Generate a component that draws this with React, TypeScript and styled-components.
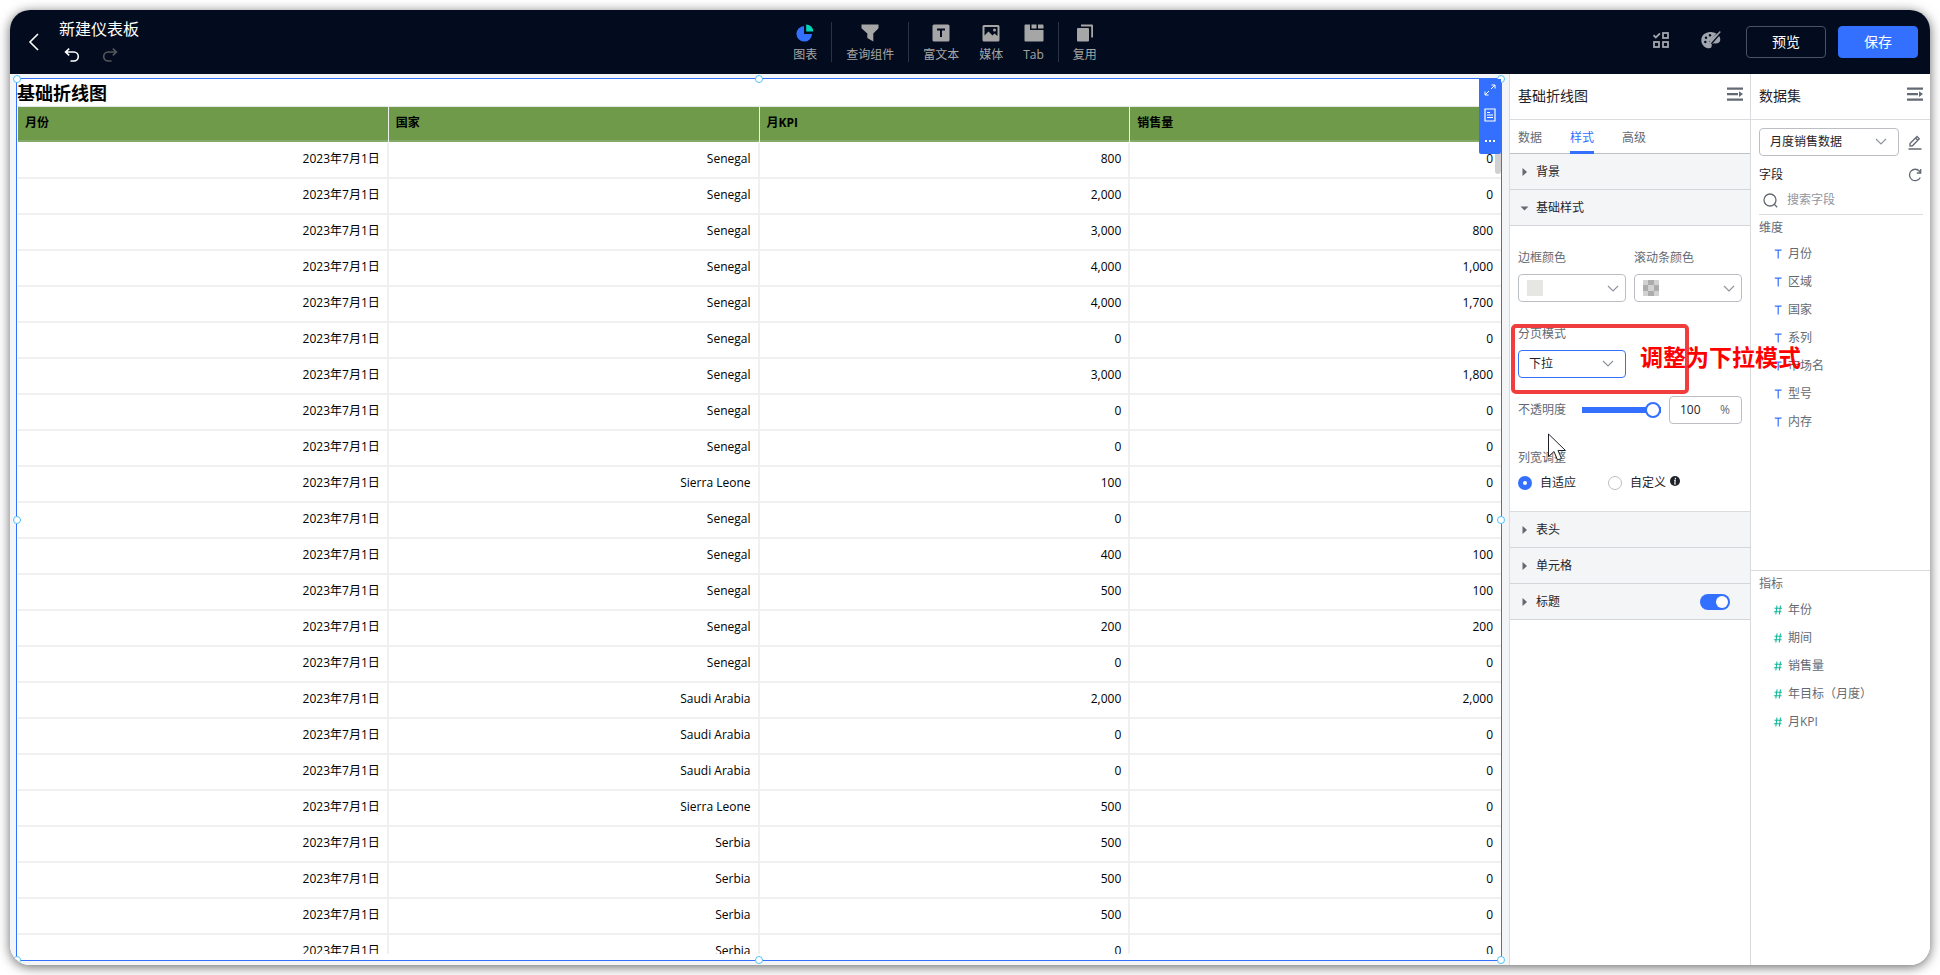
import React, { useState } from 'react';
import styled, { createGlobalStyle } from 'styled-components';

const BLUE = '#3370ff';
const INK = '#1f2329';
const GREY = '#646a73';
const LINE = '#d9dbde';

const GlobalStyle = createGlobalStyle`
  *, *::before, *::after { box-sizing: border-box; }
  html, body { margin: 0; background: #fff; }
  body {
    font-family: 'Open Sans', 'Noto Sans CJK SC', sans-serif;
    font-size: 12px;
    line-height: 18px;
    color: ${INK};
  }
  button, input, select { font: inherit; color: inherit; }
  h1, h2, p, ul { margin: 0; padding: 0; font-weight: normal; list-style: none; }
`;

const Page = styled.div`
  height: 100vh;
  min-height: 680px;
  padding: 10px;
`;

const Window = styled.div`
  height: 100%;
  display: flex;
  flex-direction: column;
  border-radius: 20px;
  overflow: hidden;
  background: #fff;
  box-shadow: 0 2px 12px rgba(0, 0, 0, 0.6);
`;

const IconButton = styled.button<{ $tone?: string }>`
  display: flex;
  padding: 0;
  border: 0;
  background: none;
  color: ${p => p.$tone ?? GREY};
  cursor: pointer;
`;

/* ---------- top bar ---------- */

const TopBar = styled.header`
  flex: none;
  height: 64px;
  padding: 0 12px 0 16px;
  display: flex;
  align-items: center;
  background: #030c1e;
  color: #fff;
`;

const TopSide = styled.div<{ $end?: boolean }>`
  flex: 1 1 0;
  display: flex;
  align-items: center;
  justify-content: ${p => (p.$end ? 'flex-end' : 'flex-start')};
`;

const TitleBlock = styled.div`
  margin: 0 0 4px 19px;
  display: flex;
  flex-direction: column;
  gap: 8px;
`;

const BoardTitle = styled.h1`
  font-size: 16px;
  line-height: 22px;
`;

const History = styled.div`
  display: flex;
  gap: 22px;
  padding-left: 5px;
`;

const Tools = styled.nav`
  display: flex;
  align-items: center;
  margin-right: 54px;
`;

const ToolGroup = styled.div`
  display: flex;
  gap: 20px;
  height: 40px;
  padding: 0 14px;
  & + & { border-left: 1px solid #2c3342; }
`;

const Tool = styled.button`
  display: flex;
  flex-direction: column;
  align-items: center;
  justify-content: flex-start;
  gap: 4px;
  height: 44px;
  padding: 2px 0 0;
  border: 0;
  background: none;
  color: #a6a6a6;
  cursor: pointer;
`;

const ActionIcons = styled.div`
  display: flex;
  align-items: center;
  gap: 32px;
  margin: 0 25px 4px 0;
`;

const Action = styled.button<{ $primary?: boolean }>`
  width: 80px;
  height: 32px;
  margin-left: ${p => (p.$primary ? '12px' : '0')};
  padding: 0;
  border: 1px solid ${p => (p.$primary ? BLUE : '#4b5160')};
  border-radius: 4px;
  background: ${p => (p.$primary ? BLUE : 'transparent')};
  color: #fff;
  font-size: 14px;
  line-height: 20px;
  cursor: pointer;
`;

/* ---------- canvas and table ---------- */

const Body = styled.div`
  flex: 1;
  min-height: 0;
  display: flex;
`;

const Canvas = styled.main`
  flex: 1;
  min-width: 0;
  padding: 4px 7px 4px 6px;
  background: #f4f5f7;
  display: flex;
`;

const Widget = styled.section`
  position: relative;
  flex: 1;
  min-width: 0;
  display: flex;
  flex-direction: column;
  padding-bottom: 6px;
  border: 1px solid ${BLUE};
  background: #fff;
`;

const WidgetTitle = styled.h2`
  height: 27px;
  font-size: 18px;
  line-height: 28px;
  font-weight: bold;
  color: #000;
`;

const TableArea = styled.div`
  position: relative;
  flex: 1;
  min-height: 0;
  overflow: hidden;
  padding-left: 1px;
  border-top: 1px solid #e6e6e6;
`;

const DataTable = styled.table`
  width: 100%;
  table-layout: fixed;
  border-collapse: separate;
  border-spacing: 0;
  color: #000;
`;

const HeadCell = styled.th`
  height: 36px;
  padding: 0 7px 4px;
  text-align: left;
  font-weight: bold;
  background: #6e9a4a;
  border-right: 1px solid #f0f0ee;
  border-bottom: 1px solid #fff;
  box-shadow: inset 0 -2px #85aa67;
  &:last-child { border-right: 0; }
`;

const Cell = styled.td`
  height: 36px;
  padding: 0 7px 2px;
  text-align: right;
  border-right: 2px solid #f0f0f0;
  border-bottom: 2px solid #f0f0f0;
  &:last-child { padding-right: 8px; border-right: 0; }
`;

const ScrollThumb = styled.span`
  position: absolute;
  right: 0;
  top: 38px;
  width: 6px;
  height: 29px;
  border-radius: 3px;
  background: #d0d0d0;
`;

const Handle = styled.span<{ $x: string; $y: string }>`
  position: absolute;
  left: ${p => p.$x};
  top: ${p => p.$y};
  width: 8px;
  height: 8px;
  margin: -4px;
  border: 1px solid #53c1f5;
  border-radius: 50%;
  background: #fff;
`;

const WidgetTools = styled.div`
  position: absolute;
  top: 0;
  right: 0;
  width: 22px;
  padding: 5px 0 6px;
  display: flex;
  flex-direction: column;
  align-items: center;
  gap: 12px;
  border-radius: 0 0 2px 2px;
  background: ${BLUE};
`;

/* ---------- side panels ---------- */

const Panel = styled.aside<{ $width: number }>`
  flex: none;
  width: ${p => p.$width}px;
  display: flex;
  flex-direction: column;
  border-left: 1px solid ${LINE};
  background: #fff;
`;

const PanelHead = styled.div`
  flex: none;
  height: 46px;
  padding: 12px 7px 0 8px;
  display: flex;
  align-items: flex-start;
  justify-content: space-between;
  border-bottom: 1px solid ${LINE};
`;

const PanelTitle = styled.h2`
  font-size: 14px;
  line-height: 20px;
`;

const Tabs = styled.div`
  display: flex;
  gap: 28px;
  height: 34px;
  padding: 0 8px;
  border-bottom: 1px solid #bfc1c5;
`;

const TabButton = styled.button<{ $active: boolean }>`
  height: 34px;
  padding: 2px 0 0;
  border: 0;
  border-top: 3px solid transparent;
  border-bottom: 3px solid ${p => (p.$active ? BLUE : 'transparent')};
  background: none;
  color: ${p => (p.$active ? BLUE : GREY)};
  cursor: pointer;
`;

const SectionHead = styled.div<{ $topLine?: boolean }>`
  display: flex;
  align-items: center;
  justify-content: space-between;
  height: ${p => (p.$topLine ? 37 : 36)}px;
  padding: 0 20px 0 12px;
  border-top: ${p => (p.$topLine ? `1px solid ${LINE}` : '0')};
  border-bottom: 1px solid #d3d5d8;
  background: #f4f5f7;
`;

const SectionToggle = styled.button`
  display: flex;
  align-items: center;
  gap: 8px;
  padding: 0;
  border: 0;
  background: none;
  cursor: pointer;
  svg { width: 6px; height: 8px; }
`;

const SectionBody = styled.div`
  padding: 23px 8px 19px;
  display: flex;
  flex-direction: column;
`;

const FieldRow = styled.div`
  display: flex;
  gap: 8px;
  margin-bottom: 23px;
`;

const Field = styled.div`
  position: relative;
  display: flex;
  flex-direction: column;
  gap: 7px;
`;

const FieldLabel = styled.label`
  color: ${GREY};
  white-space: nowrap;
`;

const ColorButton = styled.button`
  width: 108px;
  height: 28px;
  padding: 0 6px 0 8px;
  display: flex;
  align-items: center;
  justify-content: space-between;
  border: 1px solid #bbbfc4;
  border-radius: 4px;
  background: #fff;
  cursor: pointer;
`;

const Swatch = styled.span<{ $checker?: boolean }>`
  width: 16px;
  height: 16px;
  background: ${p =>
    p.$checker
      ? 'repeating-conic-gradient(from 90deg at 5px 5px, #d2d2d2 0 25%, #acacac 0 50%) 0 0 / 11px 11px'
      : '#e6e6e4'};
`;

const SelectBox = styled.div<{ $width: number }>`
  position: relative;
  width: ${p => p.$width}px;
  height: 28px;
  svg {
    position: absolute;
    right: 12px;
    top: 9px;
    pointer-events: none;
  }
`;

const Select = styled.select<{ $focused?: boolean }>`
  appearance: none;
  width: 100%;
  height: 100%;
  padding: 0 24px 0 10px;
  border: 1px solid ${p => (p.$focused ? BLUE : '#bbbfc4')};
  border-radius: 4px;
  background: #fff;
`;

const OpacityRow = styled.div`
  display: flex;
  align-items: center;
  gap: 8px;
  height: 28px;
  margin: 18px 0 25px;
`;

const Slider = styled.input`
  appearance: none;
  flex: 1;
  min-width: 0;
  height: 16px;
  margin: 0 0 0 8px;
  background: linear-gradient(${BLUE}, ${BLUE}) center / 100% 6px no-repeat;
  border-radius: 3px;
  &::-webkit-slider-thumb {
    appearance: none;
    width: 16px;
    height: 16px;
    border: 2px solid ${BLUE};
    border-radius: 50%;
    background: #fff;
  }
`;

const NumberBox = styled.label`
  width: 73px;
  height: 28px;
  padding: 0 11px 0 10px;
  display: flex;
  align-items: center;
  justify-content: space-between;
  border: 1px solid #bbbfc4;
  border-radius: 4px;
  color: ${GREY};
`;

const NumberInput = styled.input`
  width: 28px;
  padding: 0;
  border: 0;
  outline: 0;
  background: none;
  color: ${INK};
`;

const RadioRow = styled.div`
  display: flex;
  gap: 32px;
`;

const RadioLabel = styled.label`
  display: flex;
  align-items: center;
  gap: 8px;
  svg { margin: -4px 0 0 -4px; }
`;

const Radio = styled.input`
  appearance: none;
  width: 14px;
  height: 14px;
  margin: 0;
  border: 1px solid #bbbfc4;
  border-radius: 50%;
  background: #fff;
  &:checked { border: 5px solid ${BLUE}; }
`;

const Switch = styled.input`
  appearance: none;
  width: 30px;
  height: 16px;
  margin: 0;
  border-radius: 8px;
  background: #bbbfc4;
  &::before {
    content: '';
    display: block;
    width: 12px;
    height: 12px;
    margin: 2px;
    border-radius: 50%;
    background: #fff;
  }
  &:checked { background: ${BLUE}; }
  &:checked::before { margin-left: 16px; }
`;

const CalloutFrame = styled.span`
  position: absolute;
  z-index: 2;
  left: -7px;
  top: -1px;
  width: 178px;
  height: 70px;
  border: 4px solid #f03e3e;
  border-radius: 5px;
  pointer-events: none;
`;

const CalloutText = styled.span`
  position: absolute;
  z-index: 2;
  left: 122px;
  top: 19px;
  font-family: 'Liberation Serif', 'Noto Sans CJK SC', serif;
  font-size: 23px;
  line-height: 30px;
  font-weight: bold;
  color: #ff0000;
  white-space: nowrap;
  pointer-events: none;
`;

const Pointer = styled.svg`
  position: absolute;
  z-index: 3;
  left: 30px;
  top: -16px;
`;

/* ---------- dataset panel ---------- */

const DatasetTop = styled.div`
  padding: 8px 7px 0 8px;
`;

const Line = styled.div`
  display: flex;
  align-items: center;
  justify-content: space-between;
  padding-right: 1px;
`;

const FieldsLine = styled(Line)`
  height: 24px;
  margin-top: 6px;
  padding-top: 1px;
`;

const SearchLine = styled.label`
  display: flex;
  align-items: center;
  gap: 9px;
  height: 29px;
  padding-left: 4px;
  border-bottom: 1px solid ${LINE};
  color: ${GREY};
`;

const SearchInput = styled.input`
  flex: 1;
  min-width: 0;
  padding: 0;
  border: 0;
  outline: 0;
  background: none;
  &::placeholder { color: #8f959e; opacity: 1; }
`;

const FieldGroup = styled.section<{ $share: number; $line?: boolean }>`
  flex: ${p => p.$share} 1 0;
  min-height: 0;
  overflow: auto;
  border-bottom: ${p => (p.$line ? `1px solid ${LINE}` : '0')};
`;

const GroupName = styled.h2`
  padding: 4px 8px 3px;
  font-size: 12px;
  line-height: 18px;
  color: ${GREY};
`;

const FieldItem = styled.li`
  display: flex;
  align-items: center;
  gap: 6px;
  height: 28px;
  padding-left: 23px;
  color: ${GREY};
`;

/* ---------- icons ---------- */

const stroke = { fill: 'none', stroke: 'currentColor' } as const;

const Chevron = () => (
  <svg width="12" height="9" viewBox="0 0 12 9" {...stroke} color="#8f959e" strokeWidth="1.2">
    <path d="M1 2l5 5 5-5" />
  </svg>
);
const Caret = ({ open }: { open?: boolean }) => (
  <svg viewBox="0 0 6 8" overflow="visible" fill={GREY}>
    {open ? <path d="M-1.500 2.500h8L2.500 6.500z" /> : <path d="M0.500 0l4.500 4-4.500 4z" />}
  </svg>
);
const CollapseIcon = () => (
  <svg width="16" height="16" viewBox="0 0 16 16" fill={GREY}>
    <path d="M0 1.500h16v2.200H0zM0 7h11v2.200H0zM0 12.500h16v2.200H0zM12 5.200l4 2.900-4 2.900z" />
  </svg>
);
const UndoIcon = ({ flip }: { flip?: boolean }) => (
  <svg width="16" height="14" viewBox="0 0 16 14" {...stroke} strokeWidth="1.600">
    <g transform={flip ? 'translate(16 0) scale(-1 1)' : undefined}>
      <path d="M5.200 0.700L1.600 4l3.600 3.300M1.800 4h8a4.500 4.500 0 0 1 0 9H6.500" />
    </g>
  </svg>
);

const PieIcon = () => (
  <svg width="18" height="18" viewBox="0 0 18 18">
    <path fill={BLUE} d="M8 2v8h8a7.800 7.800 0 1 1-8-8z" />
    <path fill="#00d6b9" d="M10.200 0.500a7 7 0 0 1 7 7h-7z" />
  </svg>
);
const FunnelIcon = () => (
  <svg width="18" height="18" viewBox="0 0 18 18" fill="currentColor">
    <path d="M0.500 0.500h17v3.800L12.300 9.500V17.500L6.300 14V9.500L0.500 4.300z" />
  </svg>
);
const TextIcon = () => (
  <svg width="18" height="18" viewBox="0 0 18 18">
    <rect x="0.500" y="0.500" width="17" height="17" rx="1.500" fill="currentColor" />
    <path d="M5 5.500h8M9 5.500v7.500" stroke="#030c1e" strokeWidth="2" fill="none" />
  </svg>
);
const ImageIcon = () => (
  <svg width="18" height="18" viewBox="0 0 18 18">
    <rect x="0.500" y="1" width="17" height="16.500" rx="1.500" fill="currentColor" />
    <path d="M2.500 3h13v9l-3-2.500-2 2-4-4-4 4z" fill="#030c1e" />
    <circle cx="12.500" cy="6" r="1.500" fill="currentColor" />
  </svg>
);
const TabIcon = () => (
  <svg width="20" height="18" viewBox="0 0 20 18" fill="currentColor">
    <path d="M0.500 1.500Q0.500 0.500 1.500 0.500H6V6H19.500V16.500Q19.500 17.500 18.500 17.500H1.500Q0.500 17.500 0.500 16.500zM7.500 0.500h5v4h-5zM14 0.500h4.500q1 0 1 1v3H14z" />
  </svg>
);
const CopyIcon = () => (
  <svg width="18" height="18" viewBox="0 0 18 18" fill="currentColor">
    <rect x="1" y="4" width="12" height="13.500" rx="1" />
    <path d="M5 0.500h11q1 0 1 1V13.500h-1.800V2.500H5z" />
  </svg>
);
const ChecksIcon = () => (
  <svg width="16" height="16" viewBox="0 0 16 16" {...stroke} strokeWidth="1.800">
    <rect x="10" y="1" width="5" height="5" />
    <rect x="1" y="10" width="5" height="5" />
    <rect x="10" y="10" width="5" height="5" />
    <path d="M0.500 3.200l2.300 2.300 4.200-4.200" />
  </svg>
);
const PaletteIcon = () => (
  <svg width="20" height="18" viewBox="0 0 20 18">
    <path
      fill="currentColor"
      d="M9.500 1C4 1 0.300 4.600 0.300 9.200S4 17.300 8 17.300c2.400 0 2.700-1.200 2.700-2.700s1-2.400 3-2.200c3.300.3 5.600-1 5.600-3.700 0-1.800-.8-3.700-2.300-5.200C15 1.900 12.400 1 9.500 1z"
    />
    <g fill="#030c1e">
      <circle cx="4.300" cy="11" r="1.200" />
      <circle cx="5" cy="6.800" r="1.200" />
      <circle cx="9" cy="4.300" r="1.200" />
    </g>
    <path d="M19.500 0.500L9.500 12" stroke="#030c1e" strokeWidth="3.600" />
    <path d="M19.300 0.700l-7 8-3.500 4 1.200-4z" stroke="currentColor" strokeWidth="1.200" fill="currentColor" />
  </svg>
);
const SearchIcon = () => (
  <svg width="15" height="15" viewBox="0 0 15 15" {...stroke} strokeWidth="1.300">
    <circle cx="7" cy="7" r="6" />
    <path d="M11.200 11.200l3 3" />
  </svg>
);
const RefreshIcon = () => (
  <svg width="14" height="14" viewBox="0 0 14 14" {...stroke} strokeWidth="1.300">
    <path d="M12.300 9.500A5.700 5.700 0 1 1 11.500 3.200L12.700 5M12.700 1v4H8.800" />
  </svg>
);
const EditIcon = () => (
  <svg width="14" height="15" viewBox="0 0 14 15" {...stroke} strokeWidth="1.300">
    <path d="M2 11V8.500L9 1.500l2.300 2.300L4.500 10.800zM7.500 3l2.300 2.300M0.500 14H13.500" />
  </svg>
);
const TypeText = () => (
  <svg width="8" height="10" viewBox="0 0 8 10" fill="none" stroke={BLUE} strokeWidth="1.200">
    <path d="M0.800 1.200h6.800M4.200 1.200v8.300" />
  </svg>
);
const TypeNumber = () => (
  <svg width="8" height="10" viewBox="0 0 8 10" fill="none" stroke="#12b89c" strokeWidth="1.100">
    <path d="M3 0.500L1.800 9.500M6.500 0.500L5.300 9.500M0.500 3.200h7.500M0 6.800h7.500" />
  </svg>
);

/* ---------- data ---------- */

const MONTH = '2023年7月1日';
const ROWS: [string, string, string][] = [
  ['Senegal', '800', '0'],
  ['Senegal', '2,000', '0'],
  ['Senegal', '3,000', '800'],
  ['Senegal', '4,000', '1,000'],
  ['Senegal', '4,000', '1,700'],
  ['Senegal', '0', '0'],
  ['Senegal', '3,000', '1,800'],
  ['Senegal', '0', '0'],
  ['Senegal', '0', '0'],
  ['Sierra Leone', '100', '0'],
  ['Senegal', '0', '0'],
  ['Senegal', '400', '100'],
  ['Senegal', '500', '100'],
  ['Senegal', '200', '200'],
  ['Senegal', '0', '0'],
  ['Saudi Arabia', '2,000', '2,000'],
  ['Saudi Arabia', '0', '0'],
  ['Saudi Arabia', '0', '0'],
  ['Sierra Leone', '500', '0'],
  ['Serbia', '500', '0'],
  ['Serbia', '500', '0'],
  ['Serbia', '500', '0'],
  ['Serbia', '0', '0'],
];
const HANDLES: [string, string][] = [
  ['0%', '0%'], ['50%', '0%'], ['100%', '0%'],
  ['0%', '50%'], ['100%', '50%'],
  ['0%', '100%'], ['50%', '100%'], ['100%', '100%'],
];
const TOOL_GROUPS = [
  [{ name: '图表', Icon: PieIcon }],
  [{ name: '查询组件', Icon: FunnelIcon }],
  [
    { name: '富文本', Icon: TextIcon },
    { name: '媒体', Icon: ImageIcon },
    { name: 'Tab', Icon: TabIcon },
  ],
  [{ name: '复用', Icon: CopyIcon }],
];
const DIMENSIONS = ['月份', '区域', '国家', '系列', '市场名', '型号', '内存'];
const METRICS = ['年份', '期间', '销售量', '年目标（月度）', '月KPI'];

/* ---------- parts ---------- */

function Header() {
  return (
    <TopBar>
      <TopSide>
        <IconButton $tone="#fff" aria-label="返回">
          <svg width="14" height="18" viewBox="0 0 14 18" {...stroke} strokeWidth="1.600">
            <path d="M12 1L4 9l8 8" />
          </svg>
        </IconButton>
        <TitleBlock>
          <BoardTitle>新建仪表板</BoardTitle>
          <History>
            <IconButton $tone="#fff" aria-label="撤销"><UndoIcon /></IconButton>
            <IconButton $tone="#55575c" aria-label="重做"><UndoIcon flip /></IconButton>
          </History>
        </TitleBlock>
      </TopSide>
      <Tools>
        {TOOL_GROUPS.map((group, i) => (
          <ToolGroup key={i}>
            {group.map(({ name, Icon }) => (
              <Tool key={name}><Icon />{name}</Tool>
            ))}
          </ToolGroup>
        ))}
      </Tools>
      <TopSide $end>
        <ActionIcons>
          <IconButton $tone="#a1a5ad" aria-label="批量"><ChecksIcon /></IconButton>
          <IconButton $tone="#a1a5ad" aria-label="主题"><PaletteIcon /></IconButton>
        </ActionIcons>
        <Action>预览</Action>
        <Action $primary>保存</Action>
      </TopSide>
    </TopBar>
  );
}

function TableWidget() {
  return (
    <Widget>
      <WidgetTitle>基础折线图</WidgetTitle>
      <TableArea>
        <DataTable>
          <thead>
            <tr>
              {['月份', '国家', '月KPI', '销售量'].map(h => <HeadCell key={h}>{h}</HeadCell>)}
            </tr>
          </thead>
          <tbody>
            {ROWS.map(([country, kpi, sales], i) => (
              <tr key={i}>
                <Cell>{MONTH}</Cell>
                <Cell>{country}</Cell>
                <Cell>{kpi}</Cell>
                <Cell>{sales}</Cell>
              </tr>
            ))}
          </tbody>
        </DataTable>
        <ScrollThumb />
      </TableArea>
      {HANDLES.map(([x, y]) => <Handle key={x + y} $x={x} $y={y} />)}
      <WidgetTools>
        <IconButton $tone="#fff" aria-label="放大">
          <svg width="12" height="12" viewBox="0 0 12 12" {...stroke}>
            <path d="M7 5l4-4M7.500 1H11v3.500M5 7l-4 4M1 7.500V11h3.500" />
          </svg>
        </IconButton>
        <IconButton $tone="#fff" aria-label="查看数据">
          <svg width="12" height="14" viewBox="0 0 12 14" {...stroke} strokeWidth="1.200">
            <path d="M1 1h10v12H1zM3 4.500h3M3 7h6M3 9.500h6" />
          </svg>
        </IconButton>
        <IconButton $tone="#fff" aria-label="更多">
          <svg width="12" height="14" viewBox="0 0 12 14" fill="currentColor">
            <path d="M1 6h2v2H1zM5 6h2v2H5zM9 6h2v2H9z" />
          </svg>
        </IconButton>
      </WidgetTools>
    </Widget>
  );
}

function StylePanel() {
  const [tab, setTab] = useState('样式');
  const [opacity, setOpacity] = useState('100');
  const [titleOn, setTitleOn] = useState(true);
  return (
    <Panel $width={241}>
      <PanelHead>
        <PanelTitle>基础折线图</PanelTitle>
        <IconButton aria-label="收起"><CollapseIcon /></IconButton>
      </PanelHead>
      <Tabs role="tablist">
        {['数据', '样式', '高级'].map(t => (
          <TabButton key={t} role="tab" aria-selected={t === tab} $active={t === tab} onClick={() => setTab(t)}>
            {t}
          </TabButton>
        ))}
      </Tabs>
      <SectionHead><SectionToggle><Caret />背景</SectionToggle></SectionHead>
      <SectionHead><SectionToggle><Caret open />基础样式</SectionToggle></SectionHead>
      <SectionBody>
        <FieldRow>
          <Field>
            <FieldLabel htmlFor="border-color">边框颜色</FieldLabel>
            <ColorButton id="border-color"><Swatch /><Chevron /></ColorButton>
          </Field>
          <Field>
            <FieldLabel htmlFor="scroll-color">滚动条颜色</FieldLabel>
            <ColorButton id="scroll-color"><Swatch $checker /><Chevron /></ColorButton>
          </Field>
        </FieldRow>
        <Field>
          <FieldLabel htmlFor="paging">分页模式</FieldLabel>
          <SelectBox $width={108}>
            <Select id="paging" $focused defaultValue="下拉">
              <option>下拉</option>
              <option>翻页</option>
            </Select>
            <Chevron />
          </SelectBox>
          <CalloutFrame />
          <CalloutText>调整为下拉模式</CalloutText>
        </Field>
        <OpacityRow>
          <FieldLabel htmlFor="opacity">不透明度</FieldLabel>
          <Slider id="opacity" type="range" value={opacity} onChange={e => setOpacity(e.target.value)} />
          <NumberBox>
            <NumberInput aria-label="不透明度" value={opacity} onChange={e => setOpacity(e.target.value)} />%
          </NumberBox>
        </OpacityRow>
        <Field>
          <FieldLabel as="span">列宽调整</FieldLabel>
          <RadioRow>
            <RadioLabel><Radio type="radio" name="column-width" defaultChecked />自适应</RadioLabel>
            <RadioLabel>
              <Radio type="radio" name="column-width" />自定义
              <svg width="10" height="10" viewBox="0 0 10 10">
                <circle cx="5" cy="5" r="5" fill={INK} />
                <path d="M5.400 1.800v1.400M4.200 4.400h1L4.800 8h1" stroke="#fff" strokeWidth="1.100" fill="none" />
              </svg>
            </RadioLabel>
          </RadioRow>
          <Pointer width="20" height="30" viewBox="0 0 20 30">
            <path d="M0.500 1v22.500l5.500-5 3.500 8.500 4-1.500-3.500-8h7.500z" fill="#fff" stroke="#1f2329" />
          </Pointer>
        </Field>
      </SectionBody>
      <SectionHead $topLine><SectionToggle><Caret />表头</SectionToggle></SectionHead>
      <SectionHead><SectionToggle><Caret />单元格</SectionToggle></SectionHead>
      <SectionHead>
        <SectionToggle><Caret />标题</SectionToggle>
        <Switch type="checkbox" aria-label="标题" checked={titleOn} onChange={e => setTitleOn(e.target.checked)} />
      </SectionHead>
    </Panel>
  );
}

function DatasetPanel() {
  return (
    <Panel $width={180}>
      <PanelHead>
        <PanelTitle>数据集</PanelTitle>
        <IconButton aria-label="收起"><CollapseIcon /></IconButton>
      </PanelHead>
      <DatasetTop>
        <Line>
          <SelectBox $width={140}>
            <Select aria-label="数据集" defaultValue="月度销售数据">
              <option>月度销售数据</option>
            </Select>
            <Chevron />
          </SelectBox>
          <IconButton aria-label="编辑"><EditIcon /></IconButton>
        </Line>
        <FieldsLine>
          字段
          <IconButton aria-label="刷新"><RefreshIcon /></IconButton>
        </FieldsLine>
        <SearchLine>
          <SearchIcon />
          <SearchInput placeholder="搜索字段" aria-label="搜索字段" />
        </SearchLine>
      </DatasetTop>
      <FieldGroup $share={9} $line>
        <GroupName>维度</GroupName>
        <ul>{DIMENSIONS.map(d => <FieldItem key={d}><TypeText />{d}</FieldItem>)}</ul>
      </FieldGroup>
      <FieldGroup $share={10}>
        <GroupName>指标</GroupName>
        <ul>{METRICS.map(m => <FieldItem key={m}><TypeNumber />{m}</FieldItem>)}</ul>
      </FieldGroup>
    </Panel>
  );
}

export default function App() {
  return (
    <>
      <GlobalStyle />
      <Page>
        <Window>
          <Header />
          <Body>
            <Canvas><TableWidget /></Canvas>
            <StylePanel />
            <DatasetPanel />
          </Body>
        </Window>
      </Page>
    </>
  );
}
